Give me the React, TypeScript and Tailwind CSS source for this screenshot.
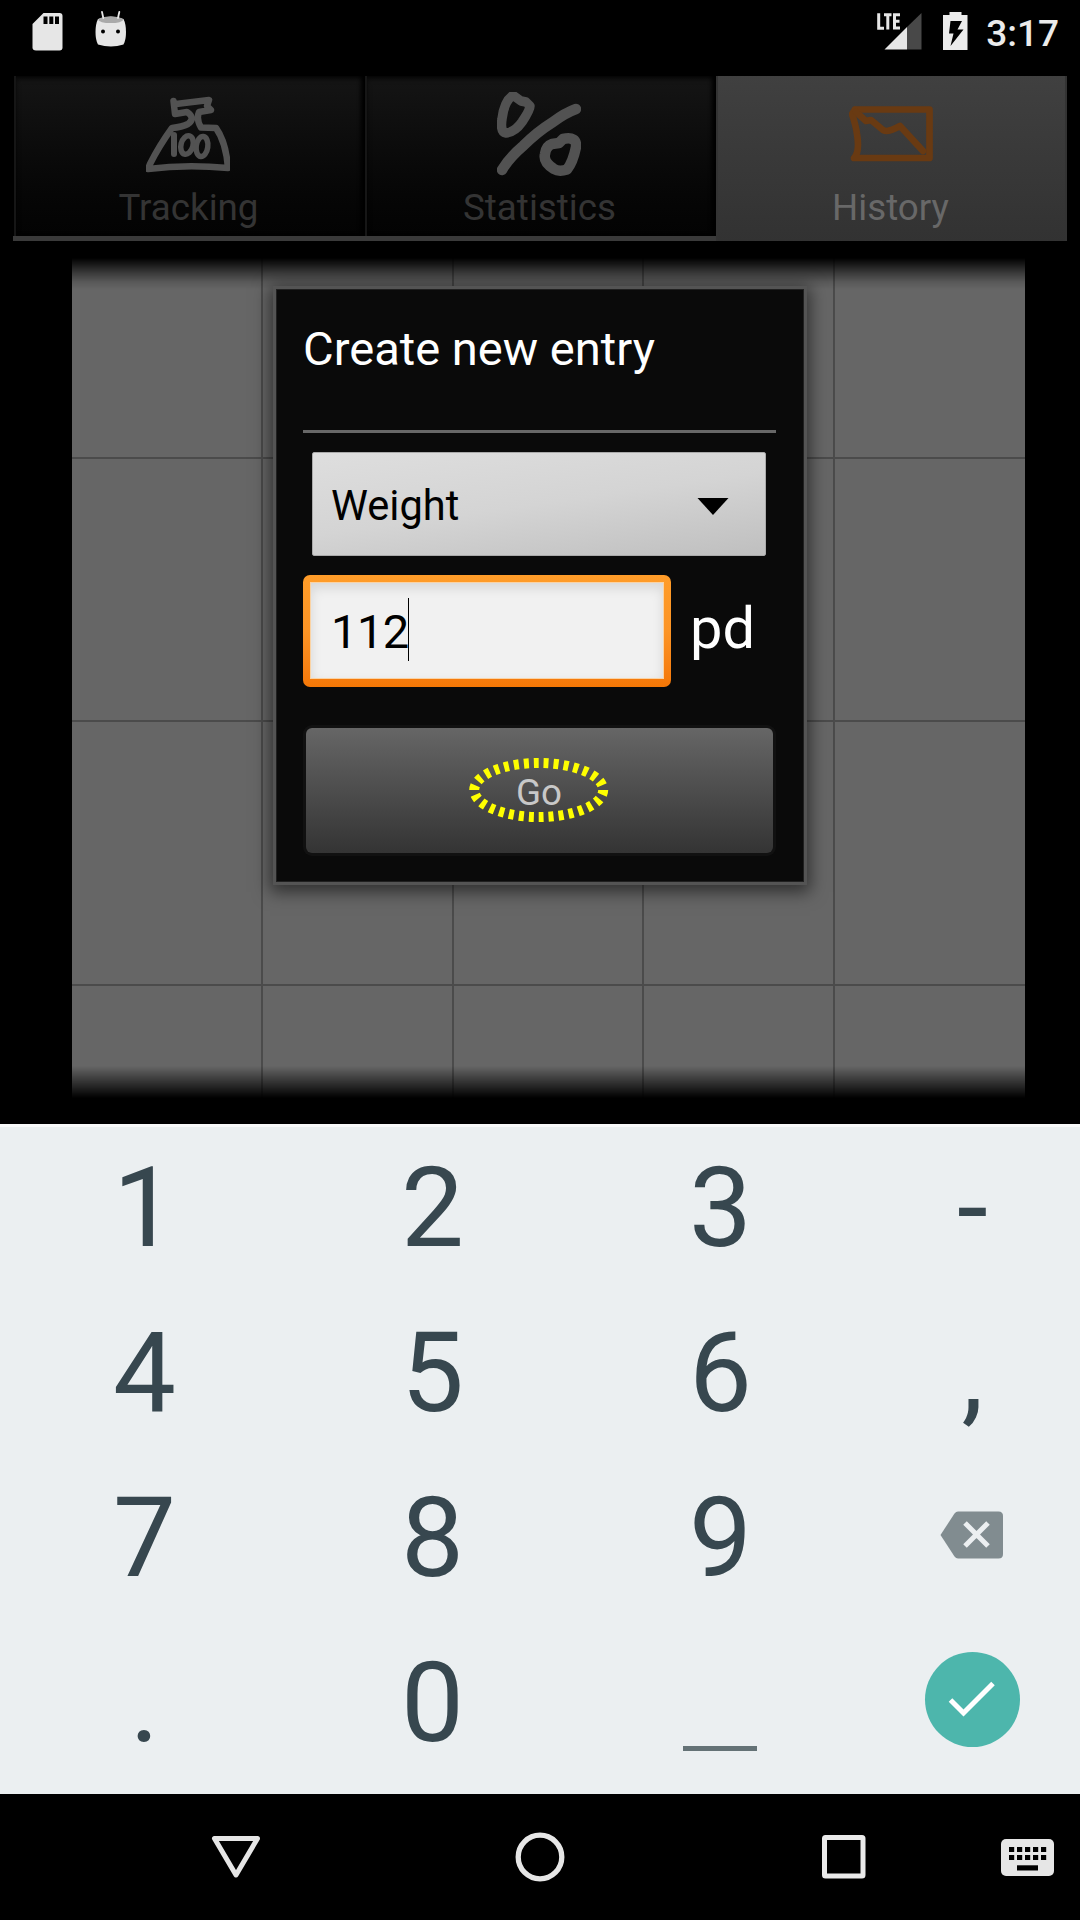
import React from 'react';

const rows = [
  ['1', '2', '3', '-'],
  ['4', '5', '6', ','],
  ['7', '8', '9', 'backspace'],
  ['.', '0', 'space', 'enter'],
];

function StatusBar() {
  return (
    <header className="flex h-[76px] items-start text-[#ebebeb]">
      <svg className="ml-[32px] mt-[12px] h-[39px] w-[32px]" viewBox="0 0 32 39">
        <path d="M11.500 1H27.500Q30.500 1 30.500 4V35.500Q30.500 38.500 27.500 38.500H4Q.5 38.500 .5 35.500V12Z" fill="#e6e6e6" />
        <path d="M11.500 4.500h4v7.500h-4zM17.300 4.500h4v7.500h-4zM23 4.500h4v7.500h-4z" fill="#000" />
      </svg>
      <svg className="ml-[31px] mt-[10px] h-[38px] w-[32px]" viewBox="0 0 32 38">
        <path d="M3 9Q16 4 28.500 9Q31 14 31 22Q31 30 28.500 34.500Q16 38.500 3 34.500Q.5 30 .5 22Q.5 14 3 9Z" fill="#e6e6e6" />
        <ellipse cx="15.700" cy="9.800" rx="12.300" ry="3.300" fill="#a9a9a9" />
        <path d="M7 2 8.300 8M24.300 2 23 8" stroke="#e6e6e6" strokeWidth="1.800" strokeLinecap="round" />
        <circle cx="8" cy="21.500" r="2" fill="#000" />
        <circle cx="23" cy="21.500" r="2" fill="#000" />
      </svg>
      <svg className="ml-auto mt-[12px] h-[40px] w-[48px]" viewBox="0 0 48 40">
        <path d="M8.500 37.500 31 15V37.500Z" fill="#e6e6e6" />
        <path d="M31 15 45.500 1V37.500H31Z" fill="#484848" />
        <path d="M2.700 1.300V16.200H8M8 2.800H15.500M11.800 2.800V17.500M24 2.800H18.500V16H24M18.500 9.200H23.500" fill="none" stroke="#e6e6e6" strokeWidth="3" />
      </svg>
      <svg className="ml-[18px] mt-[12px] h-[39px] w-[27px]" viewBox="0 0 27 39">
        <path d="M1 3H7.500V0H19.500V3H25.500V38H1Z" fill="#ebebeb" />
        <path d="M8.500 9H20L15.500 17.500H21.500L8.500 34 11.500 21.500H7Z" fill="#000" />
      </svg>
      <span className="ml-[17px] mr-[21px] mt-[12px] text-[37px] font-medium leading-[43px]">3:17</span>
    </header>
  );
}

function TrackingIcon() {
  return (
    <svg className="size-[84px]" viewBox="0 0 84 84" fill="none" stroke="#525252" strokeLinecap="round" strokeLinejoin="round">
      <path d="M27.500 9 29 22 41 20Q50 26 42 32Q36 35 26 36Q13 54 4 72L2 77Q40 72 82 76Q80 50 70 36L55 35.500Q50 27 53 20L65 18 61 14 63 8 30 12" strokeWidth="6.500" />
      <path d="M28 43V62" strokeWidth="6" />
      <ellipse cx="41" cy="53" rx="6" ry="9.500" strokeWidth="5.500" transform="rotate(15 41 53)" />
      <ellipse cx="56" cy="54.500" rx="5.800" ry="10" strokeWidth="5.500" transform="rotate(8 56 54.500)" />
    </svg>
  );
}

function StatisticsIcon() {
  return (
    <svg className="size-[84px]" viewBox="0 0 84 84" fill="none" stroke="#525252" strokeLinecap="round" strokeLinejoin="round">
      <path d="M15 4Q7 10 5 27Q3 40 9 41Q18 40 25 30Q33 18 33 14L29 10 24 9 17 4Z" strokeWidth="9.500" />
      <path d="M5 78Q12 66 26 54Q40 40 56 30Q68 21 79 17" strokeWidth="10.500" />
      <path d="M66 47Q80 44 79 55Q76 70 70 77.500Q62 80 57 77Q46 70 48 62Q49 54 55 52L62 51Z" strokeWidth="10.500" />
    </svg>
  );
}

function HistoryIcon() {
  return (
    <svg className="mr-[2px] size-[84px]" viewBox="0 0 84 84" fill="none" stroke="#693a12" strokeLinecap="round" strokeLinejoin="round">
      <path d="M6 17.500H80.500V66H5Q11 60 8 42Q7 34 3 22L6 17.500" strokeWidth="6.700" />
      <path d="M7 20 17 29 22 28 34 38Q38 41 51 34L74 59" strokeWidth="6.700" />
    </svg>
  );
}

function Tabs() {
  const idle = 'flex h-[160px] w-[351px] flex-col items-center border-l-2 border-[#161616] pt-[16px] pr-[5px] bg-linear-to-b from-[#151515] to-[#030303] text-[#343434] shadow-[inset_-4px_0_4px_#000,inset_0_3px_5px_#0008]';
  return (
    <nav className="ml-[13px] flex h-[165px] w-[1054px] border-b-[5px] border-[#3a3a3a] pl-px text-[36.750px] leading-[43px]">
      <div className={idle}><TrackingIcon /><span className="ml-px mt-[10px]">Tracking</span></div>
      <div className={idle}><StatisticsIcon /><span className="ml-px mt-[10px]">Statistics</span></div>
      <div className="flex h-[165px] w-[351px] flex-col items-center border-l-2 border-r-2 border-[#333333] bg-linear-to-b from-[#404040] to-[#323232] pt-[16px] text-[#686868]"><HistoryIcon /><span className="mr-[2px] mt-[10px]">History</span></div>
    </nav>
  );
}

function Chart() {
  return (
    <div className="ml-[72px] mt-[17px] grid h-[840px] w-[953px] grid-cols-[191px_191px_190px_191px_190px] grid-rows-[201px_263px_264px_112px] bg-[#666666] [mask-image:linear-gradient(to_bottom,transparent,#0008_14px,#000d_24px,black_32px,black_808px,transparent)]">
      {Array.from({ length: 20 }, (_, i) => (
        <div key={i} className={`${i % 5 < 4 ? 'border-r-2' : ''} ${i < 15 ? 'border-b-2' : ''} border-[#4b4b4b]`} />
      ))}
    </div>
  );
}

function Dialog() {
  return (
    <section className="absolute left-[276px] top-[289px] flex h-[593px] w-[528px] flex-col border border-[#202020] bg-[#0a0a0a] px-[26px] text-white shadow-[0_0_0_3px_#545454,0_4px_16px_6px_#00000088]">
      <h1 className="mt-[31px] text-[47.100px] leading-[56px]">Create new entry</h1>
      <hr className="mt-[53px] h-[3px] w-[473px] border-0 bg-[#686868]" />
      <div className="ml-[9px] mt-[19px] flex h-[104px] w-[454px] items-center justify-between rounded-[2px] border border-[#aaa] bg-linear-[172deg] from-[#dedede] via-[#d4d4d4] to-[#bfbfbf] pl-[18px] pr-[36px] text-[41.600px] text-black">
        <span className="pt-[4px]">Weight</span>
        <svg className="mt-[5px] h-[17px] w-[32px]" viewBox="0 0 32 17"><path d="M.5 0H31.500L16 17Z" fill="#000" /></svg>
      </div>
      <div className="mt-[19px] flex h-[112px]">
        <div className="h-[112px] w-[368px] rounded-[7px] bg-linear-to-b from-[#ff9c29] via-[#fc9425] to-[#f47706] px-[7px] pb-[8px] pt-[7px]">
          <div className="flex h-[97px] items-start border border-[#fad3a5] bg-[#f1f1f1] pl-[20px] text-black shadow-[inset_0_5px_12px_#0000001c]">
            <span className="mt-[21px] w-[77px] text-[47px] leading-[56px] tracking-[-0.5px]">112</span>
            <i className="mt-[15px] h-[63px] w-px bg-black" />
          </div>
        </div>
        <span className="ml-[19px] mt-[19px] text-[57.750px] leading-[68px]">pd</span>
      </div>
      <button className="relative ml-[3px] mt-[41px] flex h-[125px] w-[467px] items-center justify-center rounded-[6px] bg-linear-to-b from-[#666666] via-[#4d4d4d] to-[#343434] text-[36.750px] leading-[43px] text-[#c8c8c8] shadow-[0_0_0_3px_#111111]">
        <span className="mr-px mt-[3px]">Go</span>
        <svg className="absolute left-[163px] top-[29px] h-[66px] w-[140px]" viewBox="0 0 140 66">
          <ellipse cx="69.700" cy="33" rx="64.500" ry="27" fill="none" stroke="#ffff00" strokeWidth="10" strokeDasharray="5 5" pathLength="300" />
        </svg>
      </button>
    </section>
  );
}

function Key({ value }: { value: string }) {
  if (value === 'backspace')
    return (
      <svg className="mt-[54px] h-[48px] w-[64px]" viewBox="0 0 64 48">
        <path d="M18 .5H58.500Q63 .5 63 5V43Q63 47.500 58.500 47.500H18Q16 47.500 14.500 45.500L.5 24 14.500 2.500Q16 .5 18 .5Z" fill="#818c90" />
        <path d="M25 12 48 35M48 12 25 35" stroke="#eceff1" strokeWidth="5" />
      </svg>
    );
  if (value === 'enter')
    return (
      <div className="mt-[30px] flex size-[95px] items-center justify-center rounded-full bg-[#4db6ac]">
        <svg className="size-[95px]" viewBox="0 0 95 95"><path d="M25.500 48 38.500 61 68 31.500" fill="none" stroke="#fff" strokeWidth="5" /></svg>
      </div>
    );
  if (value === 'space') return <i className="mt-[124px] h-[5px] w-[74px] bg-[#647276]" />;
  return <span className="ml-px mt-[15px] text-[112px] leading-[131px]">{value}</span>;
}

function Keyboard() {
  return (
    <div className="h-[670px] border-t-[3px] border-[#f8f9fa] bg-[#ebeff1] text-[#37474f]">
      {rows.map((row) => (
        <div key={row[0]} className="grid h-[165px] grid-cols-[288px_288px_288px_216px]">
          {row.map((k) => (
            <div key={k} className="flex items-start justify-center"><Key value={k} /></div>
          ))}
        </div>
      ))}
    </div>
  );
}

function NavBar() {
  return (
    <footer className="flex h-[126px] items-center">
      <svg className="ml-[211px] size-[50px]" viewBox="0 0 50 50"><path d="M3.500 6.500H46.500L25 43Z" fill="none" stroke="#e6e6e6" strokeWidth="5" strokeLinejoin="round" /></svg>
      <svg className="ml-[254px] size-[50px]" viewBox="0 0 50 50"><circle cx="25" cy="25" r="21.800" fill="none" stroke="#e6e6e6" strokeWidth="5.300" /></svg>
      <svg className="ml-[254px] size-[50px]" viewBox="0 0 50 50"><rect x="5.500" y="5.500" width="38.500" height="38.500" rx="1" fill="none" stroke="#ebebeb" strokeWidth="5" /></svg>
      <svg className="ml-[131px] h-[38px] w-[54px]" viewBox="0 0 54 38">
        <rect x="1" y="1" width="53" height="37" rx="5" fill="#e6e6e6" />
        {[0, 1, 2, 3, 4].map((i) => (
          <g key={i} fill="#000">
            <rect x={9 + i * 8} y="9" width="5.200" height="5" />
            <rect x={9 + i * 8} y="17" width="5.200" height="5" />
          </g>
        ))}
        <rect x="17" y="27.300" width="21" height="5.200" fill="#000" />
      </svg>
    </footer>
  );
}

export default function App() {
  return (
    <main className="relative h-[1920px] w-[1080px] overflow-hidden bg-black font-['Roboto',sans-serif]">
      <StatusBar />
      <Tabs />
      <div className="flow-root h-[883px]"><Chart /></div>
      <Dialog />
      <Keyboard />
      <NavBar />
    </main>
  );
}
